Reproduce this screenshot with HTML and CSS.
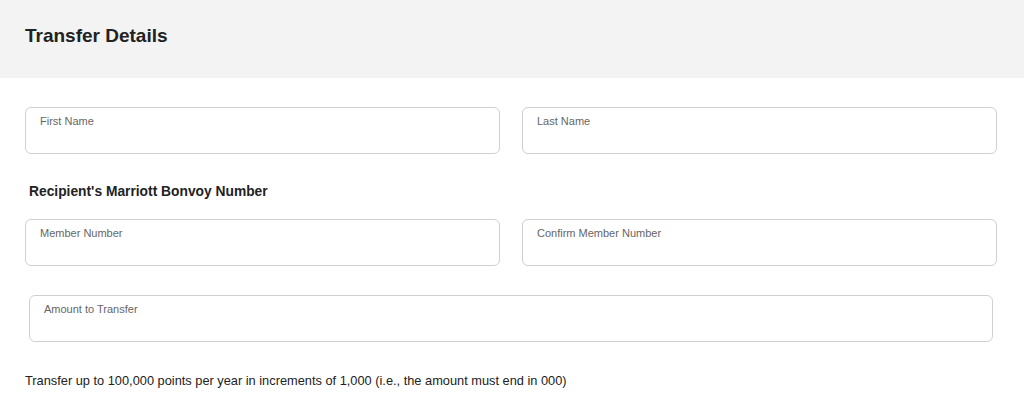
FILE: index.html
```html
<!DOCTYPE html>
<html lang="en">
<head>
    <meta charset="UTF-8">
    <meta name="viewport" content="width=device-width, initial-scale=1.0">
    <link rel="stylesheet" href="styles.css">
    <title>Transfer Details</title>
</head>
<body>

    <div class="panel-header">
        <h2>Transfer Details</h2>
    </div>

    <form class="transfer-form">
        <div class="row">
            <label class="field">
                <span class="field-label">First Name</span>
                <input type="text" name="firstName">
            </label>
            <label class="field">
                <span class="field-label">Last Name</span>
                <input type="text" name="lastName">
            </label>
        </div>

        <h3 class="section-title">Recipient's Marriott Bonvoy Number</h3>

        <div class="row">
            <label class="field">
                <span class="field-label">Member Number</span>
                <input type="text" name="memberNumber">
            </label>
            <label class="field">
                <span class="field-label">Confirm Member Number</span>
                <input type="text" name="confirmMemberNumber">
            </label>
        </div>

        <label class="field field-amount">
            <span class="field-label">Amount to Transfer</span>
            <input type="text" name="amount">
        </label>

        <p class="hint">Transfer up to 100,000 points per year in increments of 1,000 (i.e., the amount must end in 000)</p>
    </form>

</body>
</html>
```

FILE: styles.css
```css
body {
    margin: 0;
    font-family: 'Liberation Sans', Arial, sans-serif;
    color: #222;
    background-color: #ffffff;
}

.panel-header {
    background-color: #f3f3f3;
    height: 78px;
    padding: 0 25px;
    display: flex;
    align-items: center;
}

.panel-header h2 {
    margin: 0 0 6px;
    font-size: 19px;
    font-weight: bold;
    color: #222;
}

.transfer-form {
    padding: 29px 27px 0 25px;
}

.row {
    display: grid;
    grid-template-columns: 1fr 1fr;
    gap: 22px;
}

.field {
    display: flex;
    flex-direction: column;
    height: 47px;
    box-sizing: border-box;
    border: 1px solid #d0d0d0;
    border-radius: 6px;
    padding: 7px 14px 0;
}

.field-label {
    font-size: 11px;
    line-height: 13px;
    color: #666;
}

.field input {
    border: none;
    outline: none;
    padding: 0;
    font-family: inherit;
    font-size: 14px;
    background: transparent;
}

.section-title {
    margin: 0;
    padding: 30px 0 0 4px;
    height: 65px;
    box-sizing: border-box;
    font-size: 13.8px;
    line-height: 16px;
    font-weight: bold;
    color: #222;
}

.field-amount {
    margin: 29px 4px 0;
}

.hint {
    margin: 31px 0 0;
    font-size: 12.8px;
    line-height: 15px;
    color: #222;
}
```
